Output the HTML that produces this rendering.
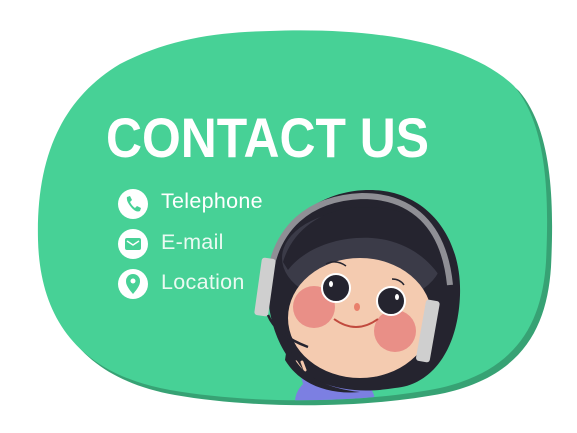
<!DOCTYPE html>
<html><head><meta charset="utf-8"><style>
html,body{margin:0;padding:0;background:#fff;width:577px;height:433px;overflow:hidden;position:relative;font-family:"Liberation Sans",sans-serif}
svg{position:absolute;left:0;top:0}
h1{position:absolute;left:106px;top:110px;margin:0;font-size:56px;line-height:56px;font-weight:bold;color:#fff;transform:scaleX(0.89);transform-origin:0 0;white-space:nowrap}
.li{position:absolute;left:161px;font-size:21.5px;color:#fff;line-height:20px;letter-spacing:0.3px}
</style></head><body>
<svg width="577" height="433" viewBox="0 0 577 433">
<defs>
<clipPath id="b"><path d="M270 31 C380 27 470 44 514 86 C548 126 549 200 546 262 C542 322 518 370 440 388 C360 404 250 404 170 390 C80 374 40 320 38 240 C36 160 60 100 120 64 C170 38 220 32 270 31Z"/></clipPath>
</defs>
<path transform="translate(5,5)" fill="#37a274" d="M270 31 C380 27 470 44 514 86 C548 126 549 200 546 262 C542 322 518 370 440 388 C360 404 250 404 170 390 C80 374 40 320 38 240 C36 160 60 100 120 64 C170 38 220 32 270 31Z"/>
<path fill="#47d196" d="M270 31 C380 27 470 44 514 86 C548 126 549 200 546 262 C542 322 518 370 440 388 C360 404 250 404 170 390 C80 374 40 320 38 240 C36 160 60 100 120 64 C170 38 220 32 270 31Z"/>
<g clip-path="url(#b)">
<ellipse cx="335" cy="402" rx="40" ry="30" fill="#7c7fe2"/>
<path d="M300 372 L312 360 L325 385 L305 392Z" fill="#7c7fe2"/>
<path d="M366 190 C425 188 462 235 460 295 C458 350 432 385 395 388 C370 392 345 392 320 382 C288 372 268 330 268 290 C270 230 312 192 366 190Z" fill="#25242f"/>
</g>
<path d="M299 374 l-5 -7 m8 4 l-6 -9 m9 8 l-3 -8" stroke="#f4c8ad" stroke-width="3" stroke-linecap="round"/>
<ellipse cx="362" cy="258" rx="80" ry="48" fill="#3b3b48"/>
<ellipse cx="360" cy="318" rx="72" ry="60" fill="#f4cbb0"/>
<path d="M288 270 C305 248 338 236 372 238 C402 240 428 256 442 280 L442 240 C420 210 380 205 350 208 C318 212 292 232 283 262Z" fill="#25242f"/>
<path d="M288 340 C292 370 320 388 360 392 C330 395 300 385 285 360Z" fill="#25242f"/>
<circle cx="314" cy="307" r="21" fill="#e98f87"/>
<circle cx="395" cy="331" r="21" fill="#e98f87"/>
<circle cx="336" cy="288" r="14" fill="#25242f" stroke="#fff" stroke-width="2"/>
<circle cx="391" cy="301" r="14" fill="#25242f" stroke="#fff" stroke-width="2"/>
<ellipse cx="331" cy="284" rx="2" ry="3" fill="#fff"/>
<ellipse cx="397" cy="297" rx="2" ry="3" fill="#fff"/>
<path d="M326 264 q10 -5 20 2 M392 279 q8 0 12 6" stroke="#25242f" stroke-width="1.5" fill="none"/>
<ellipse cx="357" cy="307" rx="3" ry="4" fill="#e9806c"/>
<path d="M334 319 q22 16 44 0" stroke="#c14a3e" stroke-width="2" fill="none"/>
<path d="M268 290 C272 225 312 198 362 196 C412 196 444 225 450 285" stroke="#8f8f95" stroke-width="6" fill="none"/>
<rect x="258" y="258" width="14" height="58" rx="3" fill="#cfcfcf" transform="rotate(8 265 287)"/>
<rect x="421" y="300" width="14" height="62" rx="3" fill="#cfcfcf" transform="rotate(10 428 330)"/>
<path d="M268 315 q8 20 40 32" stroke="#25242f" stroke-width="2.5" fill="none"/>
<circle cx="133" cy="204" r="15" fill="#fff"/>
<path d="M127 197 l3 -1 l2 4 l-2 2 q2 4 5 6 l2 -2 l4 2 l-1 3 q-4 2 -9 -4 q-5 -6 -4 -10z" fill="#47d196"/>
<circle cx="133" cy="244" r="15" fill="#fff"/>
<rect x="125" y="238" width="16" height="12" rx="2" fill="#47d196"/>
<path d="M127 241 l6 4 l6 -4" stroke="#fff" stroke-width="1.5" fill="none"/>
<circle cx="133" cy="284" r="15" fill="#fff"/>
<path d="M133 294 C127 287 126 284 126 281 a7 7 0 0 1 14 0 c0 3 -1 6 -7 13z" fill="#47d196"/>
<circle cx="133" cy="281" r="2.5" fill="#fff"/>
</svg>
<h1>CONTACT US</h1>
<div class="li" style="top:191px">Telephone</div>
<div class="li" style="top:232px;color:#eafaf2">E-mail</div>
<div class="li" style="top:272px;color:#eafaf2">Location</div>
</body></html>
